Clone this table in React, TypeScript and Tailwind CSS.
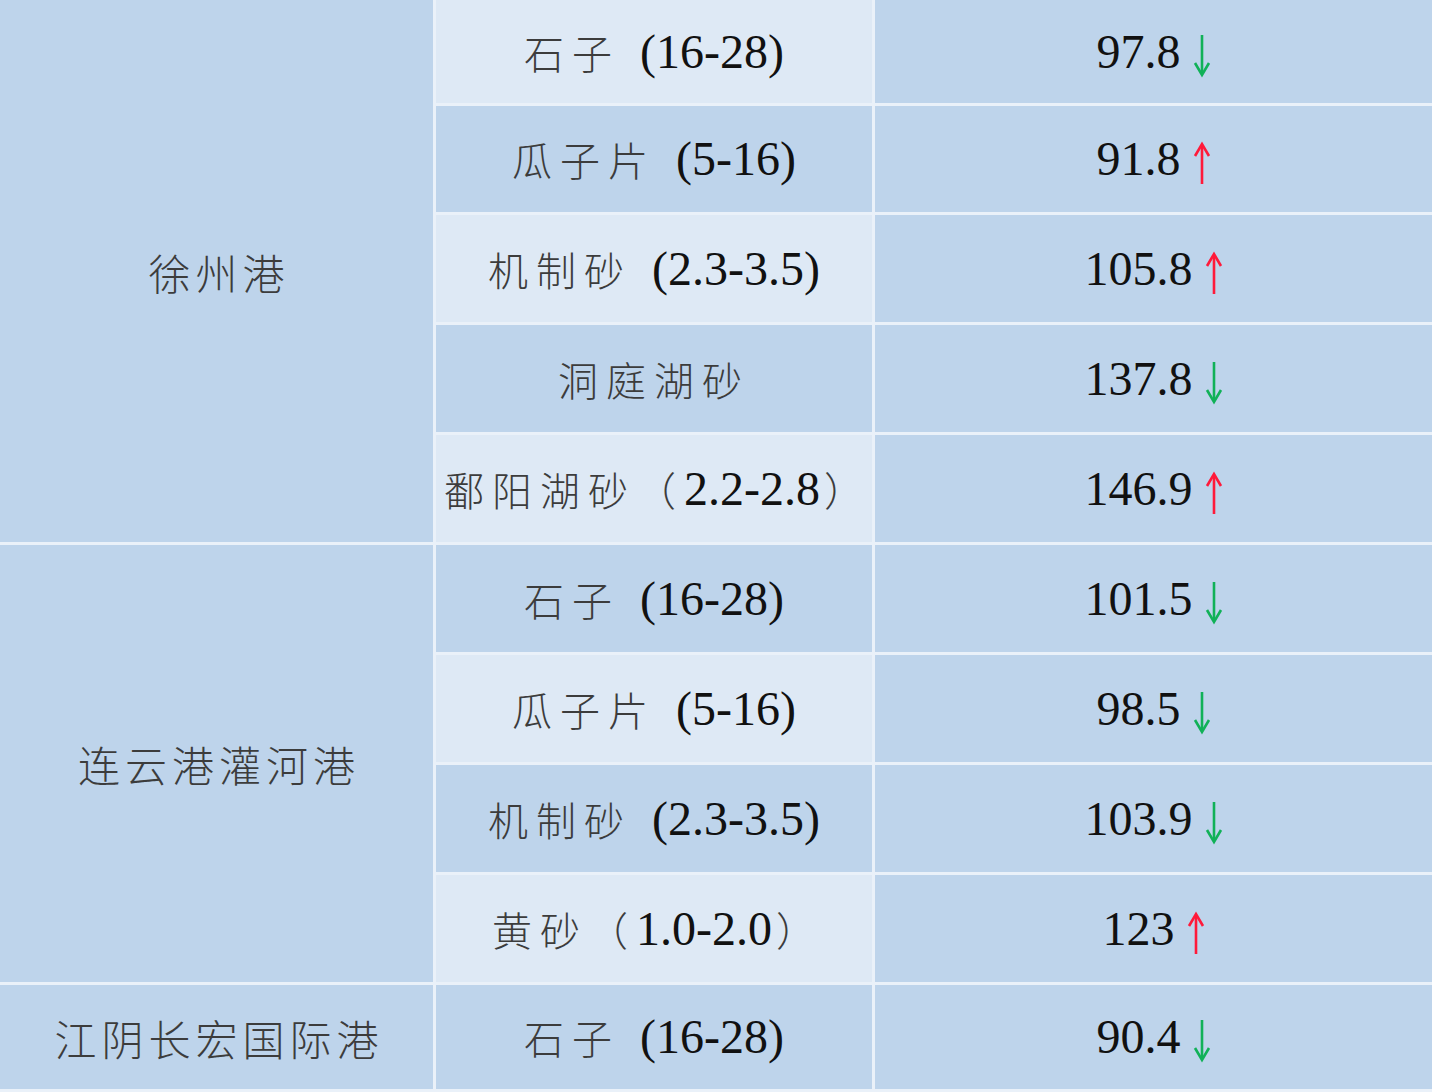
const zh = '"Noto Sans CJK SC", "Noto Sans CJK JP", sans-serif';

type Trend = "up" | "down";

interface Row {
  port?: string;
  span?: number;
  zh: string;
  num?: string;
  tail?: string;
  price: string;
  trend: Trend;
}

const rows: Row[] = [
  { port: "徐州港", span: 5, zh: "石子", num: "(16-28)", price: "97.8", trend: "down" },
  { zh: "瓜子片", num: "(5-16)", price: "91.8", trend: "up" },
  { zh: "机制砂", num: "(2.3-3.5)", price: "105.8", trend: "up" },
  { zh: "洞庭湖砂", price: "137.8", trend: "down" },
  { zh: "鄱阳湖砂（", num: "2.2-2.8", tail: "）", price: "146.9", trend: "up" },
  { port: "连云港灌河港", span: 4, zh: "石子", num: "(16-28)", price: "101.5", trend: "down" },
  { zh: "瓜子片", num: "(5-16)", price: "98.5", trend: "down" },
  { zh: "机制砂", num: "(2.3-3.5)", price: "103.9", trend: "down" },
  { zh: "黄砂（", num: "1.0-2.0", tail: "）", price: "123", trend: "up" },
  { port: "江阴长宏国际港", span: 1, zh: "石子", num: "(16-28)", price: "90.4", trend: "down" },
];

const rowStart = [
  "row-start-1",
  "row-start-2",
  "row-start-3",
  "row-start-4",
  "row-start-5",
  "row-start-6",
  "row-start-7",
  "row-start-8",
  "row-start-9",
  "row-start-10",
];

const rowSpan: Record<number, string> = {
  1: "row-span-1",
  4: "row-span-4",
  5: "row-span-5",
};

function Arrow({ trend }: { trend: Trend }) {
  const color = trend === "up" ? "#ff1a3a" : "#11b158";
  return (
    <svg width="18" height="44" viewBox="0 0 18 44" className="mt-[8px] ml-[12px]">
      {trend === "up" ? (
        <>
          <line x1="9" y1="4" x2="9" y2="43" stroke={color} strokeWidth="2.6" />
          <path d="M2 15 L9 3 L16 15" fill="none" stroke={color} strokeWidth="2.6" />
        </>
      ) : (
        <>
          <line x1="9" y1="1" x2="9" y2="40" stroke={color} strokeWidth="2.6" />
          <path d="M2 29 L9 41 L16 29" fill="none" stroke={color} strokeWidth="2.6" />
        </>
      )}
    </svg>
  );
}

export default function App() {
  return (
    <div className="w-[1432px] h-[1092px] bg-white">
      <div className="grid grid-cols-[433px_436px_557px] grid-rows-[103px_106px_repeat(7,107px)_104px] gap-[3px] bg-[#eaf1f9] pb-[3px]">
        {rows.map((r, i) => (
          <>
            {r.port && (
              <div
                key={`p${i}`}
                className={`col-start-1 ${rowStart[i]} ${rowSpan[r.span ?? 1]} bg-[#bed4eb] flex items-center justify-center text-[42px] tracking-[5px] pl-[5px] text-[#3c3c3c] font-light`}
                style={{ fontFamily: zh }}
              >
                {r.port}
              </div>
            )}
            <div
              key={`m${i}`}
              className={`col-start-2 ${rowStart[i]} ${i % 2 === 0 ? "bg-[#dee9f5]" : "bg-[#bed4eb]"} flex items-center justify-center`}
            >
              <span className="text-[40px] tracking-[8px] text-[#3c3c3c] font-light" style={{ fontFamily: zh }}>
                {r.zh}
              </span>
              {r.num && (
                <span
                  className={`text-[48px] text-[#111] ${r.tail ? "" : "ml-[20px]"}`}
                  style={{ fontFamily: '"Liberation Serif", serif' }}
                >
                  {r.num}
                </span>
              )}
              {r.tail && (
                <span className="text-[40px] text-[#3c3c3c] font-light ml-[4px]" style={{ fontFamily: zh }}>
                  {r.tail}
                </span>
              )}
            </div>
            <div key={`v${i}`} className={`col-start-3 ${rowStart[i]} bg-[#bed4eb] flex items-center justify-center`}>
              <span className="text-[48px] text-[#111]" style={{ fontFamily: '"Liberation Serif", serif' }}>
                {r.price}
              </span>
              <Arrow trend={r.trend} />
            </div>
          </>
        ))}
      </div>
    </div>
  );
}
